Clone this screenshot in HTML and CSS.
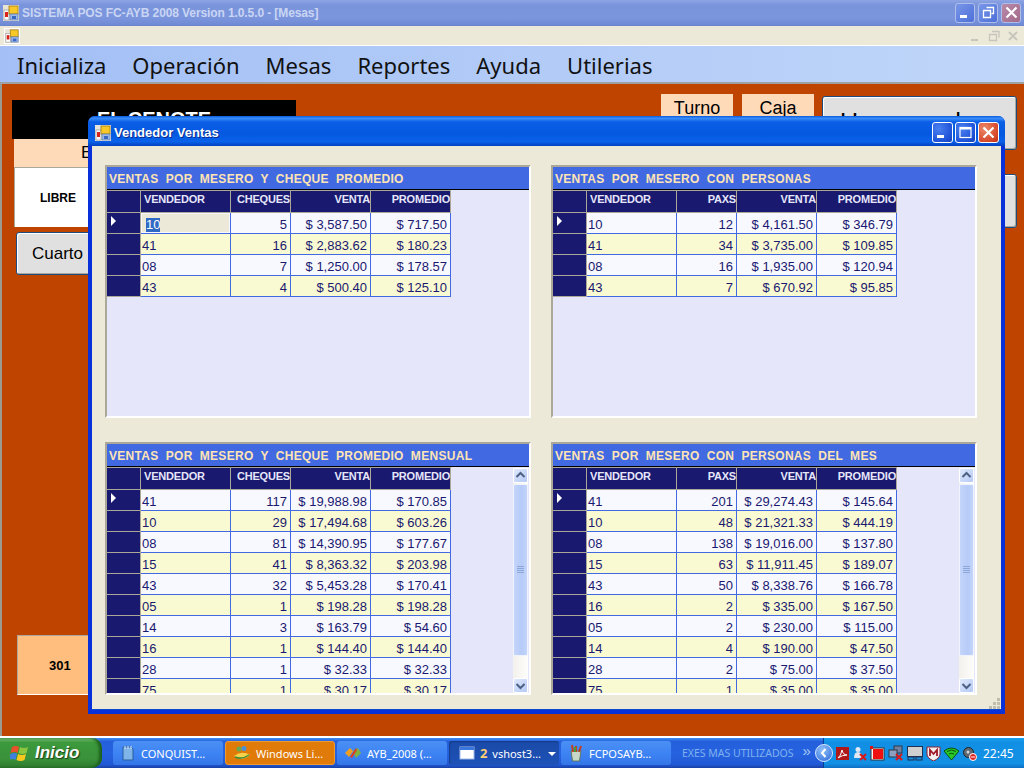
FILE: index.html
```html
<!DOCTYPE html>
<html lang="es">
<head>
<meta charset="utf-8">
<title>SISTEMA POS FC-AYB 2008</title>
<link rel="stylesheet" href="styles.css">
</head>
<body>
<svg class="defs" width="0" height="0" aria-hidden="true">
  <symbol id="app" viewBox="0 0 16 16">
    <rect x="0" y="0" width="16" height="16" fill="#e8e4d8"/>
    <rect x="1" y="5" width="5" height="10" fill="#fff" stroke="#888" stroke-width=".6"/>
    <rect x="2" y="7" width="3" height="5" fill="#d8221a"/>
    <rect x="6" y="1" width="9" height="8" fill="#f8c828" stroke="#a07810" stroke-width=".8"/>
    <rect x="7" y="9" width="8" height="6" fill="#9cb8e8" stroke="#5070a8" stroke-width=".6"/>
    <rect x="9" y="11" width="4" height="3" fill="#3868c0"/>
  </symbol>
</svg>

<header class="titlebar">
  <svg class="ico16" width="16" height="16"><use href="#app"/></svg>
  <span class="title-text">SISTEMA POS FC-AYB 2008 Version 1.0.5.0 - [Mesas]</span>
  <div class="wbtns wbtns-main">
    <span class="wbtn wbtn-in"><svg width="19" height="19" viewBox="0 0 19 19"><rect x="4" y="12" width="7" height="3" fill="#fff"/></svg></span>
    <span class="wbtn wbtn-in"><svg width="19" height="19" viewBox="0 0 19 19"><path d="M7.500 4.500h7v6h-2M4.500 7.500h7v7h-7z" fill="none" stroke="#fff" stroke-width="1.300"/></svg></span>
    <span class="wbtn wbtn-x-in"><svg width="19" height="19" viewBox="0 0 19 19"><path d="M4.500 4.500l10 10M14.500 4.500l-10 10" stroke="#fff" stroke-width="2.200"/></svg></span>
  </div>
</header>

<div class="mdistrip">
  <span class="mdi-ico"><svg width="14" height="14"><use href="#app"/></svg></span>
  <div class="mdi-ctl">
    <svg width="16" height="16" viewBox="0 0 16 16"><rect x="4" y="11" width="7" height="2" fill="#c8c6bc"/></svg>
    <svg width="16" height="16" viewBox="0 0 16 16"><path d="M6 3.500h7v6M3.500 6.500h7v6h-7z" fill="none" stroke="#c8c6bc" stroke-width="1.300"/></svg>
    <svg width="16" height="16" viewBox="0 0 16 16"><path d="M4 4l8 8M12 4l-8 8" stroke="#c8c6bc" stroke-width="2"/></svg>
  </div>
</div>

<nav class="menubar">
  <span>Inicializa</span><span>Operación</span><span>Mesas</span><span>Reportes</span><span>Ayuda</span><span>Utilerias</span>
</nav>

<main class="form">
  <section class="left">
    <div class="brand">EL CENOTE</div>
    <div class="status">Estado</div>
    <div class="libre">LIBRE</div>
    <button class="btn btn-cuarto">Cuarto</button>
    <div class="room">301</div>
  </section>
  <section class="right">
    <div class="right-top">
      <div class="peach">Turno</div>
      <div class="peach">Caja</div>
      <button class="btn btn-big">Un mesa de</button>
    </div>
    <button class="btn btn-second">Mesa</button>
  </section>

  <div class="dialog">
    <div class="dlg-title">
      <svg class="ico16" width="16" height="16"><use href="#app"/></svg>
      <span class="dlg-text">Vendedor Ventas</span>
      <div class="wbtns wbtns-dlg">
        <span class="wbtn wbtn-a"><svg width="21" height="21" viewBox="0 0 21 21"><rect x="5" y="13" width="7" height="3" fill="#fff"/></svg></span>
        <span class="wbtn wbtn-a"><svg width="21" height="21" viewBox="0 0 21 21"><rect x="5" y="5.500" width="11" height="10" fill="none" stroke="#fff" stroke-width="1.200"/><rect x="5" y="5" width="11" height="2.500" fill="#fff"/></svg></span>
        <span class="wbtn wbtn-x"><svg width="21" height="21" viewBox="0 0 21 21"><path d="M5.500 5.500l10 10M15.500 5.500l-10 10" stroke="#fff" stroke-width="2.200"/></svg></span>
      </div>
    </div>
    <div class="dlg-body">

      <article class="panel">
        <h2 class="cap">VENTAS POR MESERO Y CHEQUE PROMEDIO</h2>
        <div class="gridwrap">
          <table class="grid">
            <thead><tr><th class="c0"></th><th class="c1">VENDEDOR</th><th class="c2">CHEQUES</th><th class="c3">VENTA</th><th class="c4">PROMEDIO</th></tr></thead>
            <tbody>
              <tr><td class="rh"><i class="tri"></i></td><td class="sel"><b class="hl">10</b></td><td>5</td><td>$ 3,587.50</td><td>$ 717.50</td></tr>
              <tr><td class="rh"></td><td>41</td><td>16</td><td>$ 2,883.62</td><td>$ 180.23</td></tr>
              <tr><td class="rh"></td><td>08</td><td>7</td><td>$ 1,250.00</td><td>$ 178.57</td></tr>
              <tr><td class="rh"></td><td>43</td><td>4</td><td>$ 500.40</td><td>$ 125.10</td></tr>
            </tbody>
          </table>
        </div>
      </article>

      <article class="panel">
        <h2 class="cap">VENTAS POR MESERO CON PERSONAS</h2>
        <div class="gridwrap">
          <table class="grid">
            <thead><tr><th class="c0"></th><th class="c1">VENDEDOR</th><th class="c2">PAXS</th><th class="c3">VENTA</th><th class="c4">PROMEDIO</th></tr></thead>
            <tbody>
              <tr><td class="rh"><i class="tri"></i></td><td>10</td><td>12</td><td>$ 4,161.50</td><td>$ 346.79</td></tr>
              <tr><td class="rh"></td><td>41</td><td>34</td><td>$ 3,735.00</td><td>$ 109.85</td></tr>
              <tr><td class="rh"></td><td>08</td><td>16</td><td>$ 1,935.00</td><td>$ 120.94</td></tr>
              <tr><td class="rh"></td><td>43</td><td>7</td><td>$ 670.92</td><td>$ 95.85</td></tr>
            </tbody>
          </table>
        </div>
      </article>

      <article class="panel">
        <h2 class="cap">VENTAS POR MESERO Y CHEQUE PROMEDIO MENSUAL</h2>
        <div class="gridwrap">
          <table class="grid">
            <thead><tr><th class="c0"></th><th class="c1">VENDEDOR</th><th class="c2">CHEQUES</th><th class="c3">VENTA</th><th class="c4">PROMEDIO</th></tr></thead>
            <tbody>
              <tr><td class="rh"><i class="tri"></i></td><td>41</td><td>117</td><td>$ 19,988.98</td><td>$ 170.85</td></tr>
              <tr><td class="rh"></td><td>10</td><td>29</td><td>$ 17,494.68</td><td>$ 603.26</td></tr>
              <tr><td class="rh"></td><td>08</td><td>81</td><td>$ 14,390.95</td><td>$ 177.67</td></tr>
              <tr><td class="rh"></td><td>15</td><td>41</td><td>$ 8,363.32</td><td>$ 203.98</td></tr>
              <tr><td class="rh"></td><td>43</td><td>32</td><td>$ 5,453.28</td><td>$ 170.41</td></tr>
              <tr><td class="rh"></td><td>05</td><td>1</td><td>$ 198.28</td><td>$ 198.28</td></tr>
              <tr><td class="rh"></td><td>14</td><td>3</td><td>$ 163.79</td><td>$ 54.60</td></tr>
              <tr><td class="rh"></td><td>16</td><td>1</td><td>$ 144.40</td><td>$ 144.40</td></tr>
              <tr><td class="rh"></td><td>28</td><td>1</td><td>$ 32.33</td><td>$ 32.33</td></tr>
              <tr><td class="rh"></td><td>75</td><td>1</td><td>$ 30.17</td><td>$ 30.17</td></tr>
            </tbody>
          </table>
          <div class="sbar">
            <span class="sb-btn"><svg width="15" height="15" viewBox="0 0 15 15"><path d="M3.500 9l4-4 4 4" fill="none" stroke="#4d6185" stroke-width="2"/></svg></span>
            <span class="sb-thumb"><svg width="7" height="8" viewBox="0 0 7 8"><path d="M0 .5h7M0 2.500h7M0 4.500h7M0 6.500h7" stroke="#8ca6d8"/></svg></span>
            <span class="sb-track"></span>
            <span class="sb-btn"><svg width="15" height="15" viewBox="0 0 15 15"><path d="M3.500 6l4 4 4-4" fill="none" stroke="#4d6185" stroke-width="2"/></svg></span>
          </div>
        </div>
      </article>

      <article class="panel">
        <h2 class="cap">VENTAS POR MESERO CON PERSONAS DEL MES</h2>
        <div class="gridwrap">
          <table class="grid">
            <thead><tr><th class="c0"></th><th class="c1">VENDEDOR</th><th class="c2">PAXS</th><th class="c3">VENTA</th><th class="c4">PROMEDIO</th></tr></thead>
            <tbody>
              <tr><td class="rh"><i class="tri"></i></td><td>41</td><td>201</td><td>$ 29,274.43</td><td>$ 145.64</td></tr>
              <tr><td class="rh"></td><td>10</td><td>48</td><td>$ 21,321.33</td><td>$ 444.19</td></tr>
              <tr><td class="rh"></td><td>08</td><td>138</td><td>$ 19,016.00</td><td>$ 137.80</td></tr>
              <tr><td class="rh"></td><td>15</td><td>63</td><td>$ 11,911.45</td><td>$ 189.07</td></tr>
              <tr><td class="rh"></td><td>43</td><td>50</td><td>$ 8,338.76</td><td>$ 166.78</td></tr>
              <tr><td class="rh"></td><td>16</td><td>2</td><td>$ 335.00</td><td>$ 167.50</td></tr>
              <tr><td class="rh"></td><td>05</td><td>2</td><td>$ 230.00</td><td>$ 115.00</td></tr>
              <tr><td class="rh"></td><td>14</td><td>4</td><td>$ 190.00</td><td>$ 47.50</td></tr>
              <tr><td class="rh"></td><td>28</td><td>2</td><td>$ 75.00</td><td>$ 37.50</td></tr>
              <tr><td class="rh"></td><td>75</td><td>1</td><td>$ 35.00</td><td>$ 35.00</td></tr>
            </tbody>
          </table>
          <div class="sbar">
            <span class="sb-btn"><svg width="15" height="15" viewBox="0 0 15 15"><path d="M3.500 9l4-4 4 4" fill="none" stroke="#4d6185" stroke-width="2"/></svg></span>
            <span class="sb-thumb"><svg width="7" height="8" viewBox="0 0 7 8"><path d="M0 .5h7M0 2.500h7M0 4.500h7M0 6.500h7" stroke="#8ca6d8"/></svg></span>
            <span class="sb-track"></span>
            <span class="sb-btn"><svg width="15" height="15" viewBox="0 0 15 15"><path d="M3.500 6l4 4 4-4" fill="none" stroke="#4d6185" stroke-width="2"/></svg></span>
          </div>
        </div>
      </article>

    </div>
    <svg class="grip" width="12" height="12" viewBox="0 0 12 12"><path d="M8 0h3v3h-3zM4 4h3v3h-3zM8 4h3v3h-3zM0 8h3v3h-3zM4 8h3v3h-3zM8 8h3v3h-3z" fill="#c0bdaf"/></svg>
  </div>
</main>

<footer class="taskbar">
  <div class="start">
    <svg width="20" height="19" viewBox="0 0 20 19"><path d="M2 3q4-2 7 0l-1.500 6q-3-2-7 0z" fill="#e8512a"/><path d="M10 3q4 2 8 0l-1.500 6q-4 2-8 0z" fill="#8cc63f"/><path d="M.500 10q4-2 6.500 0l-1.500 6q-3-2-6.500 0z" fill="#3f7fe0"/><path d="M8 10q4 2 8 0l-1.500 6q-4 2-8 0z" fill="#f8c81e"/></svg>
    <span>Inicio</span>
  </div>
  <div class="tasks">
    <div class="task"><svg width="16" height="16" viewBox="0 0 16 16"><path d="M3 2h8l2 2v11H3z" fill="#7fb4e8" stroke="#2b5c9c"/><path d="M5 1v3M8 1v3M11 1v3" stroke="#dfe8f4"/></svg><span>CONQUIST…</span></div>
    <div class="task task-orange"><svg width="18" height="16" viewBox="0 0 18 16"><circle cx="6" cy="4" r="2.500" fill="#6aa84f"/><circle cx="11" cy="3.500" r="2.500" fill="#4a90d9"/><path d="M1 11q8-6 16-1q-8 7-16 1z" fill="#f6d24a"/><path d="M2 12q7 3 14-2" stroke="#3d8f3d" stroke-width="1.500" fill="none"/></svg><span>Windows Li…</span></div>
    <div class="task"><svg width="18" height="16" viewBox="0 0 18 16"><path d="M1 8l5-5 3 3-4 6z" fill="#f0a020"/><path d="M9 6l5-3 3 5-5 5z" fill="#80b040"/><path d="M6 12l6-9 1 2-5 8z" fill="#e03c20"/></svg><span>AYB_2008 (…</span></div>
    <div class="task task-active"><svg width="16" height="16" viewBox="0 0 16 16"><rect x="1" y="2" width="14" height="12" fill="#fff" stroke="#9cb8e8"/><rect x="1" y="2" width="14" height="3" fill="#3a78e0"/></svg><span><b class="cnt">2</b> vshost3…</span><i class="caret"></i></div>
    <div class="task"><svg width="16" height="18" viewBox="0 0 16 18"><path d="M3 7h10l-1.500 10h-7z" fill="#c8d8c8" stroke="#607860"/><path d="M5 8L4 1M8 8V2M11 8l2-6" stroke-width="2" fill="none" stroke="#c04020"/><path d="M7 8V3" stroke="#40a040" stroke-width="2"/></svg><span>FCPOSAYB…</span></div>
  </div>
  <div class="toolbar"><span>EXES MAS UTILIZADOS</span><em>»</em></div>
  <div class="tray">
    <span class="tray-back"><svg width="10" height="10" viewBox="0 0 10 10"><path d="M6.500 1L3 5l3.500 4" fill="none" stroke="#fff" stroke-width="2"/></svg></span>
    <svg width="13" height="13" viewBox="0 0 13 13"><rect width="13" height="13" fill="#b01818"/><path d="M2 11q3-2 4-8 1 5 5 5-5 0-9 3z" fill="none" stroke="#fff"/></svg>
    <svg width="15" height="15" viewBox="0 0 15 15"><circle cx="6" cy="3.500" r="2.500" fill="#dfe8f4"/><path d="M2 12q0-6 4-6t4 6z" fill="#dfe8f4"/><path d="M8 8l6 6M14 8l-6 6" stroke="#d81818" stroke-width="2"/></svg>
    <svg width="15" height="15" viewBox="0 0 15 15"><rect x="1" y="2" width="13" height="12" fill="#f4f4f4" stroke="#333"/><rect x="3" y="3" width="10" height="10" fill="#f01010"/><rect x="0" y="0" width="3" height="3" fill="#e01010"/></svg>
    <svg width="16" height="16" viewBox="0 0 16 16"><rect x="6" y="1" width="8" height="7" fill="#7080a0" stroke="#303848"/><rect x="1" y="5" width="8" height="7" fill="#8da0c0" stroke="#303848"/><path d="M8 9l6 6M14 9l-6 6" stroke="#d81818" stroke-width="2"/></svg>
    <svg width="16" height="15" viewBox="0 0 16 15"><rect x=".5" y=".5" width="15" height="10" fill="#d0d0d0" stroke="#203050"/><rect x="1" y="11" width="6" height="3" fill="none" stroke="#203050"/><rect x="9" y="11" width="6" height="3" fill="none" stroke="#203050"/></svg>
    <svg width="15" height="15" viewBox="0 0 15 15"><path d="M1 1h13v7q0 4-6.500 7Q1 12 1 8z" fill="#f4f0f0" stroke="#8a2030"/><path d="M4 10V4l3.500 4L11 4v6" fill="none" stroke="#a01828" stroke-width="1.800"/></svg>
    <svg width="15" height="15" viewBox="0 0 15 15"><path d="M0 5q7.500-6 15 0l-7.500 9z" fill="#28c828" stroke="#0a500a"/><path d="M3 5.500q4.500-3 9 0M5 8q2.500-1.500 5 0" stroke="#0a500a" fill="none"/></svg>
    <svg width="15" height="15" viewBox="0 0 15 15"><circle cx="6.500" cy="6.500" r="5" fill="#606870" stroke="#202428"/><circle cx="6" cy="6" r="1.500" fill="#d0d8e0"/><circle cx="11" cy="11" r="3.500" fill="#e02020" stroke="#fff"/><path d="M9 11h4" stroke="#fff"/></svg>
    <span class="clock">22:45</span>
  </div>
</footer>
</body>
</html>
```

FILE: styles.css
```css
* { box-sizing: border-box; }
html, body { margin: 0; padding: 0; }
body {
  width: 1024px; height: 768px; overflow: hidden;
  display: flex; flex-direction: column;
  font-family: "Liberation Sans", Arial, sans-serif;
  background: #bf4400;
}
.defs { position: absolute; }
svg { display: block; flex: none; }

.titlebar {
  height: 26px; flex: none;
  display: flex; align-items: center; padding: 0 3px 0 3px;
  background: linear-gradient(180deg, #8ea5e4 0, #7a94dc 20%, #7c96de 70%, #7089d4 100%);
  border-bottom: 1px solid #6b84cf;
}
.title-text { margin-left: 3px; font: bold 12px "Liberation Sans", sans-serif; color: #c9d5f3; letter-spacing: -.1px; }
.wbtns { margin-left: auto; display: flex; }
.wbtns-main { gap: 3px; }
.wbtns-dlg { gap: 2px; margin-right: 1px; }
.wbtn { display: flex; align-items: center; justify-content: center; border: 1px solid #fff; border-radius: 3px; }
.wbtns-main .wbtn { width: 20px; height: 20px; border-color: #aebde9; }
.wbtn-in { background: linear-gradient(135deg, #7896e8, #4d70d8); }
.wbtn-x-in { background: linear-gradient(135deg, #b88aa8, #a26a8a); }
.wbtns-dlg .wbtn { width: 21px; height: 21px; }
.wbtn-a { background: radial-gradient(circle at 30% 30%, #4a80f0, #1f52d8 70%, #1640b8); }
.wbtn-x { background: radial-gradient(circle at 30% 30%, #ea8a6a, #d6482a 70%, #b83018); }

.mdistrip {
  height: 20px; flex: none; display: flex; align-items: center; padding-left: 4px;
  background: #ece9d8; border-bottom: 1px solid #fff;
}
.mdi-ico { width: 16px; height: 16px; background: #fff; display: flex; align-items: center; justify-content: center; }
.mdi-ctl { margin-left: auto; display: flex; gap: 3px; padding-right: 3px; }

.menubar {
  height: 38px; flex: none; display: flex; align-items: center; gap: 26px; padding: 1px 0 0 17px;
  font: 22px "Noto Sans", sans-serif; color: #111;
  background: linear-gradient(90deg, #a3bff5, #c0d6f9);
  border-bottom: 2px solid #a0a0a0;
}

.form {
  flex: 1; position: relative; display: flex; justify-content: space-between;
  border-left: 2px solid #9a9a90;
  padding: 16px 7px 41px 10px;
}
.left { width: 284px; display: flex; flex-direction: column; }
.brand { height: 39px; background: #000; color: #fff; font: bold 20px "Liberation Sans", sans-serif; padding: 8px 0 0 85px; }
.status { height: 28px; margin-left: 2px; background: #ffdab9; font-size: 17px; padding: 4px 0 0 67px; }
.libre {
  height: 60px; margin-left: 2px; background: #fff; border-top: 1px solid #aca899; border-left: 1px solid #aca899;
  font-size: 12px; font-weight: bold; padding: 23px 0 0 25px;
}
.btn {
  font-family: "Liberation Sans", sans-serif; background: #e0e0e0; color: #000; cursor: default;
  border: 1px solid #1f4b7a; border-radius: 3px; box-shadow: inset 1px 1px 0 #fff, inset -1px -1px 0 #a8a8a0;
}
.btn-cuarto { width: 180px; height: 43px; margin: 5px 0 0 4px; font-size: 17px; text-align: left; padding: 0 0 0 15px; }
.room {
  margin-top: auto; margin-left: 5px; width: 200px; height: 60px;
  background: #ffbe7d; border-left: 1px solid #aca899; border-top: 1px solid #aca899; border-bottom: 1px solid #fff;
  font-size: 13px; font-weight: bold; padding: 22px 0 0 31px;
}
.right { width: 356px; display: flex; flex-direction: column; align-items: flex-end; margin-top: -6px; }
.right-top { display: flex; gap: 9px; }
.peach { width: 72px; height: 40px; background: #ffdab9; font-size: 18px; text-align: center; padding-top: 4px; }
.btn-big { width: 195px; height: 54px; margin: 2px 0 0 -1px; font-size: 25px; text-align: left; padding: 0 0 1px 17px; }
.btn-second { width: 195px; height: 54px; margin-top: 24px; font-size: 20px; }

.dialog {
  position: absolute; left: 86px; top: 32px; width: 917px; height: 598px;
  display: flex; flex-direction: column;
  background: #ece9d8;
  border: solid #0831d9; border-width: 0 4px 4px 4px; border-radius: 7px 7px 0 0;
  box-shadow: inset 0 -1px 0 #0c48d0;
}
.dlg-title {
  height: 30px; flex: none; margin: 0 -4px; padding: 3px 5px 0 7px;
  display: flex; align-items: center;
  background: linear-gradient(180deg, #0a5be0 0, #3a8cf8 8%, #0b5ee6 20%, #0558e0 60%, #0a62ea 85%, #0340c0 100%);
  border-radius: 7px 7px 0 0;
}
.dlg-text { margin-left: 3px; font: bold 13px "Liberation Sans", sans-serif; color: #fff; text-shadow: 1px 1px 0 #0a2c90; }
.dlg-body {
  flex: 1; display: grid;
  grid-template-columns: 426px 426px; grid-template-rows: 253px 253px;
  column-gap: 20px; row-gap: 24px;
  padding: 19px 0 0 13px;
}
.grip { position: absolute; right: 0; bottom: 0; }

.panel {
  display: flex; flex-direction: column; min-height: 0;
  background: #e6e6fa;
  border: 2px solid; border-color: #aca899 #fff #fff #aca899;
}
.cap {
  margin: 0; height: 22px; flex: none;
  background: #4169e1;
  font: bold 12px "Liberation Sans", sans-serif; letter-spacing: .3px; word-spacing: 3.500px;
  color: #ffe4b5; line-height: 25px; padding-left: 2px; white-space: nowrap;
  box-sizing: content-box; border-bottom: 1px solid #000;
}
.gridwrap { flex: 1; min-height: 0; display: flex; overflow: hidden; }
.grid { border-collapse: separate; border-spacing: 0; table-layout: fixed; width: 344px; height: 0; flex: none; font-size: 13px; color: #191970; }
.grid th {
  height: 23px; padding: 1px 0 0 3px; vertical-align: top; text-align: right;
  background: #191970; color: #e6e6fa;
  font: bold 11px/15px "Liberation Sans", sans-serif; letter-spacing: -.2px;
  border: solid #aca899; border-width: 1px 1px 1px 0; white-space: nowrap; overflow: hidden;
}
.grid .c0 { width: 34px; }
.grid .c1 { width: 90px; text-align: left; }
.grid .c2 { width: 60px; }
.grid .c3 { width: 80px; }
.grid .c4 { width: 80px; }
.grid td {
  height: 21px; padding: 2px 3px 0 1px; text-align: right; white-space: nowrap; overflow: hidden;
  background: #f8f8ff; line-height: 17px;
  border-right: 1px solid #4169e1; border-bottom: 1px solid #4169e1;
}
.grid tr:nth-child(even) td { background: #fafad2; }
.grid td:nth-child(2) { text-align: left; }
.grid td.rh, .grid tr:nth-child(even) td.rh { background: #191970; border-color: #aca899; position: relative; }
.tri { position: absolute; left: 4px; top: 3px; border-left: 5px solid #fff; border-top: 5px solid transparent; border-bottom: 5px solid transparent; }
.grid td.sel { background: #ece9d8; padding-left: 5px; box-shadow: inset 0 0 0 1px #f8f8ff; }
.hl { font-weight: normal; background: #316ac5; color: #fff; display: inline-block; line-height: 14px; }

.sbar { width: 15px; margin: 1px 1px 0 auto; flex: none; display: flex; flex-direction: column; background: linear-gradient(90deg, #f3f1ec, #fdfdfb); }
.sb-btn { height: 15px; flex: none; border: 1px solid #fff; border-radius: 2px; background: linear-gradient(135deg, #e0e9fc, #b4c9f5); display: block; }
.sb-btn svg { margin: -1px; }
.sb-thumb { height: 172px; flex: none; margin-top: 1px; border: 1px solid #eef3fd; border-radius: 2px; background: linear-gradient(90deg, #c4d5fb, #b6cbf7 60%, #c4d5fb); display: flex; align-items: center; justify-content: center; }
.sb-track { flex: 1; }

.taskbar {
  height: 32px; flex: none; display: flex; align-items: center;
  border-top: 2px solid #fff;
  background: linear-gradient(180deg, #3f8cf3 0, #245edb 12%, #2663e0 50%, #2159d6 88%, #1941a5 100%);
  color: #fff; font-size: 11px;
}
.start {
  width: 102px; height: 30px; flex: none; display: flex; align-items: center; gap: 5px; padding-left: 10px;
  background: linear-gradient(180deg, #7cc07c 0, #3c9a3c 15%, #3a913a 70%, #2c7a2c 100%);
  border-radius: 0 10px 10px 0;
  box-shadow: inset -3px 0 3px #1d5f1d;
  font: italic bold 17px "Liberation Sans", sans-serif; text-shadow: 1px 1px 1px #1a3d1a;
}
.tasks { display: flex; gap: 2px; margin-left: 11px; flex: none; }
.task {
  width: 110px; height: 24px; display: flex; align-items: center; gap: 5px; padding-left: 7px;
  border-radius: 3px; background: linear-gradient(180deg, #4a90f4, #3c81f3 60%, #3476e8);
  font: 11px "Noto Sans", sans-serif; color: #fff; white-space: nowrap; position: relative;
}
.task-orange { background: #e07a08; border: 1px solid #f09a30; }
.task-active { background: linear-gradient(180deg, #1a4aa8, #1e52b7); padding-left: 10px; box-shadow: inset 1px 1px 1px #163a86; }
.cnt { color: #ffcf73; font-weight: bold; font-size: 13px; margin-right: 2px; }
.caret { position: absolute; right: 3px; top: 11px; border-top: 4px solid #fff; border-left: 4px solid transparent; border-right: 4px solid transparent; }
.toolbar { flex: 1; display: flex; align-items: center; padding-left: 11px; font: 10.500px "Noto Sans", sans-serif; color: #7fb0ee; min-width: 0; white-space: nowrap; }
.toolbar em { font: normal 15px "Liberation Sans", sans-serif; color: #a8c8f4; margin: -6px 0 0 9px; }
.tray {
  width: 201px; height: 30px; flex: none; display: flex; align-items: center; gap: 3px;
  background: linear-gradient(180deg, #17a0ec 0, #118fe4 15%, #1290e4 85%, #0e6fc4 100%);
  border-left: 1px solid #0a3e96; position: relative; padding-left: 12px;
}
.tray-back {
  position: absolute; left: -9px; top: 6px; width: 18px; height: 18px; border-radius: 50%;
  background: radial-gradient(circle at 40% 30%, #8fc0fa, #2a68d8); border: 1px solid #d8e8ff;
  display: flex; align-items: center; justify-content: center;
}
.clock { margin-left: 3px; font: 12px "Noto Sans", sans-serif; color: #fff; }
```
